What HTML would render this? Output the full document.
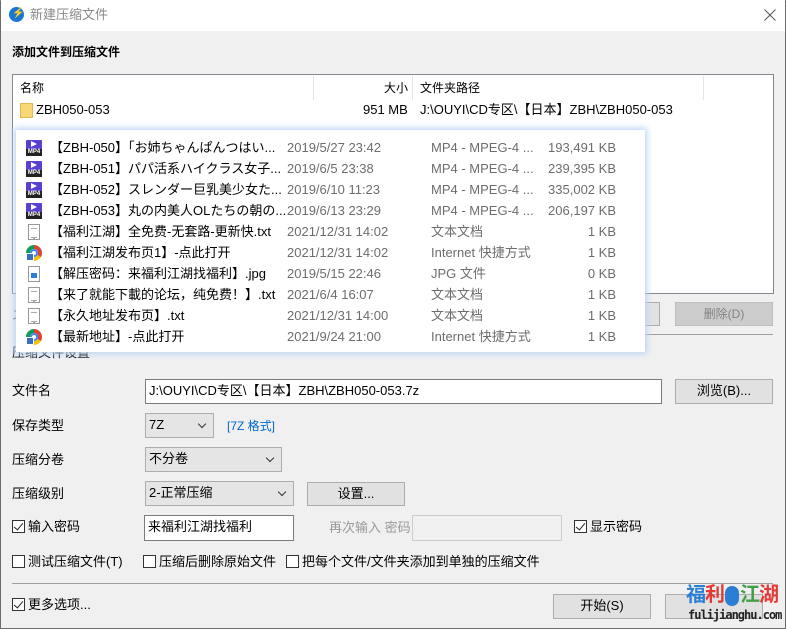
<!DOCTYPE html>
<html><head><meta charset="utf-8"><style>
*{margin:0;padding:0;box-sizing:border-box}
body{width:786px;height:629px;overflow:hidden;background:#f0f0f0;font-family:"Liberation Sans","Noto Sans CJK SC",sans-serif;font-size:12px;color:#000;position:relative}
.a{position:absolute;white-space:nowrap;line-height:16px}
.btn{position:absolute;background:#e1e1e1;border:1px solid #adadad;text-align:center;line-height:22px}
.inp{position:absolute;background:#fff;border:1px solid #7a7a7a;padding-left:3px;line-height:22px}
.sel{position:absolute;background:#e5e5e5;border:1px solid #adadad;padding-left:3px;line-height:22px}
.sel:after{content:"";position:absolute;right:8px;top:7px;width:5px;height:5px;border-right:1px solid #333;border-bottom:1px solid #333;transform:rotate(45deg)}
.cb{position:absolute;width:13px;height:13px;border:1px solid #333;background:#fff}
.cb.on:after{content:"";position:absolute;left:3px;top:0px;width:4px;height:8px;border-right:1.5px solid #222;border-bottom:1.5px solid #222;transform:rotate(40deg)}
.row{position:absolute;left:0;width:629px;height:21px}
.row span{position:absolute;top:2px;line-height:16px;white-space:nowrap}
.g{color:#6d6d6d}
.mp4{position:absolute;left:10px;top:2px;width:16px;height:16px;background:#5b3fd0;border-radius:1px}
.mp4:before{content:"";position:absolute;left:5px;top:1px;border-left:6px solid #fff;border-top:3.5px solid transparent;border-bottom:3.5px solid transparent}
.mp4 i{position:absolute;left:0;bottom:0;width:16px;height:7px;background:#222;color:#fff;font-size:6px;line-height:7px;font-style:normal;text-align:center;font-weight:bold}
.txt{position:absolute;left:12px;top:2px;width:12px;height:16px;background:#fff;border:1px solid #999}
.txt:before{content:"";position:absolute;left:2px;top:3px;width:6px;height:8px;border-top:1px solid #aaa;border-bottom:1px solid #aaa;box-shadow:0 3px 0 -2px #aaa}
.chr{position:absolute;left:10px;top:2px;width:16px;height:16px;border-radius:50%;background:conic-gradient(#db4437 0 120deg,#f4c20d 120deg 240deg,#0f9d58 240deg)}
.chr:before{content:"";position:absolute;left:4px;top:4px;width:8px;height:8px;border-radius:50%;background:#fff;box-shadow:inset 0 0 0 2px #4285f4}
.chr i{position:absolute;left:0;bottom:0;width:8px;height:8px;background:#3a6fc0;border:1px solid #fff}
.jpg{position:absolute;left:12px;top:2px;width:12px;height:16px;background:#fff;border:1px solid #999}
.jpg:before{content:"";position:absolute;left:2px;top:6px;width:6px;height:5px;background:#2a7fd4}
</style></head><body>
<div style="position:absolute;left:0;top:0;width:786px;height:629px;border:1px solid #6b6b6b;border-top-color:#aaa"></div>
<div style="position:absolute;left:1px;top:0;width:784px;height:31px;background:#fff"></div>
<div style="position:absolute;left:9px;top:7px;width:15px;height:15px;border-radius:50%;background:#1976d2"></div>
<div class="a" style="left:12px;top:6px;color:#fff;font-size:10px;font-weight:bold">⚡</div>
<div class="a" style="left:30px;top:7px;color:#888;font-size:13px">新建压缩文件</div>
<svg style="position:absolute;left:764px;top:9px" width="12" height="12"><path d="M0.5 0.5L11.5 11.5M11.5 0.5L0.5 11.5" stroke="#555" stroke-width="1"/></svg>

<div class="a" style="left:12px;top:44px;font-weight:bold;font-size:12px">添加文件到压缩文件</div>

<div style="position:absolute;left:12px;top:74px;width:762px;height:220px;background:#fff;border:1px solid #828790"></div>
<div class="a" style="left:20px;top:80px">名称</div>
<div style="position:absolute;left:313px;top:76px;width:1px;height:24px;background:#e5e5e5"></div>
<div class="a" style="left:384px;top:80px">大小</div>
<div style="position:absolute;left:412px;top:76px;width:1px;height:24px;background:#e5e5e5"></div>
<div class="a" style="left:420px;top:80px">文件夹路径</div>
<div style="position:absolute;left:703px;top:76px;width:1px;height:24px;background:#e5e5e5"></div>
<div style="position:absolute;left:20px;top:103px;width:13px;height:15px;background:#f8d775;border:1px solid #e0b84f"></div>
<div class="a" style="left:36px;top:102px;font-size:13px">ZBH050-053</div>
<div class="a" style="left:363px;top:102px;font-size:13px">951 MB</div>
<div class="a" style="left:420px;top:102px;font-size:13px">J:\OUYI\CD专区\【日本】ZBH\ZBH050-053</div>

<div class="btn" style="left:560px;top:302px;width:100px;height:24px"></div>
<div class="btn" style="left:675px;top:302px;width:98px;height:24px;background:#cccccc;border-color:#bfbfbf;color:#838383">删除(D)</div>
<div class="a" style="left:12px;top:307px">ス</div>
<div style="position:absolute;left:20px;top:334px;width:753px;height:1px;background:#a0a0a0"></div>
<div class="a" style="left:12px;top:345px;font-size:13px">压缩文件设置</div>

<div style="position:absolute;left:16px;top:130px;width:629px;height:222px;background:#fff;box-shadow:0 0 6px 2px #bcd6f4;font-size:13px">
<div class="row" style="top:8px"><div class="mp4"><i>MP4</i></div><span style="left:34px">【ZBH-050】「お姉ちゃんぱんつはい...</span><span class="g" style="left:271px">2019/5/27 23:42</span><span class="g" style="left:415px">MP4 - MPEG-4 ...</span><span class="g" style="right:29px">193,491 KB</span></div>
<div class="row" style="top:29px"><div class="mp4"><i>MP4</i></div><span style="left:34px">【ZBH-051】パパ活系ハイクラス女子...</span><span class="g" style="left:271px">2019/6/5 23:38</span><span class="g" style="left:415px">MP4 - MPEG-4 ...</span><span class="g" style="right:29px">239,395 KB</span></div>
<div class="row" style="top:50px"><div class="mp4"><i>MP4</i></div><span style="left:34px">【ZBH-052】スレンダー巨乳美少女た...</span><span class="g" style="left:271px">2019/6/10 11:23</span><span class="g" style="left:415px">MP4 - MPEG-4 ...</span><span class="g" style="right:29px">335,002 KB</span></div>
<div class="row" style="top:71px"><div class="mp4"><i>MP4</i></div><span style="left:34px">【ZBH-053】丸の内美人OLたちの朝の...</span><span class="g" style="left:271px">2019/6/13 23:29</span><span class="g" style="left:415px">MP4 - MPEG-4 ...</span><span class="g" style="right:29px">206,197 KB</span></div>
<div class="row" style="top:92px"><div class="txt"></div><span style="left:34px">【福利江湖】全免费-无套路-更新快.txt</span><span class="g" style="left:271px">2021/12/31 14:02</span><span class="g" style="left:415px">文本文档</span><span class="g" style="right:29px">1 KB</span></div>
<div class="row" style="top:113px"><div class="chr"><i></i></div><span style="left:34px">【福利江湖发布页1】-点此打开</span><span class="g" style="left:271px">2021/12/31 14:02</span><span class="g" style="left:415px">Internet 快捷方式</span><span class="g" style="right:29px">1 KB</span></div>
<div class="row" style="top:134px"><div class="jpg"></div><span style="left:34px">【解压密码：来福利江湖找福利】.jpg</span><span class="g" style="left:271px">2019/5/15 22:46</span><span class="g" style="left:415px">JPG 文件</span><span class="g" style="right:29px">0 KB</span></div>
<div class="row" style="top:155px"><div class="txt"></div><span style="left:34px">【来了就能下載的论坛，纯免费！】.txt</span><span class="g" style="left:271px">2021/6/4 16:07</span><span class="g" style="left:415px">文本文档</span><span class="g" style="right:29px">1 KB</span></div>
<div class="row" style="top:176px"><div class="txt"></div><span style="left:34px">【永久地址发布页】.txt</span><span class="g" style="left:271px">2021/12/31 14:00</span><span class="g" style="left:415px">文本文档</span><span class="g" style="right:29px">1 KB</span></div>
<div class="row" style="top:197px"><div class="chr"><i></i></div><span style="left:34px">【最新地址】-点此打开</span><span class="g" style="left:271px">2021/9/24 21:00</span><span class="g" style="left:415px">Internet 快捷方式</span><span class="g" style="right:29px">1 KB</span></div>
</div>

<div class="a" style="left:12px;top:383px;font-size:13px">文件名</div>
<div class="inp" style="left:145px;top:379px;width:517px;height:25px;font-size:13px">J:\OUYI\CD专区\【日本】ZBH\ZBH050-053.7z</div>
<div class="btn" style="left:675px;top:379px;width:98px;height:25px;font-size:13px">浏览(B)...</div>

<div class="a" style="left:12px;top:418px;font-size:13px">保存类型</div>
<div class="sel" style="left:145px;top:413px;width:69px;height:25px;font-size:13px">7Z</div>
<div class="a" style="left:227px;top:418px;color:#0066cc">[7Z 格式]</div>

<div class="a" style="left:12px;top:452px;font-size:13px">压缩分卷</div>
<div class="sel" style="left:145px;top:447px;width:137px;height:25px;font-size:13px">不分卷</div>

<div class="a" style="left:12px;top:486px;font-size:13px">压缩级别</div>
<div class="sel" style="left:145px;top:481px;width:149px;height:25px;font-size:13px">2-正常压缩</div>
<div class="btn" style="left:307px;top:482px;width:98px;height:24px;font-size:13px">设置...</div>

<div class="cb on" style="left:12px;top:520px"></div>
<div class="a" style="left:28px;top:519px;font-size:13px">输入密码</div>
<div class="inp" style="left:144px;top:515px;width:150px;height:26px;font-size:13px">来福利江湖找福利</div>
<div class="a" style="left:329px;top:520px;color:#999;font-size:13px">再次输入 密码</div>
<div style="position:absolute;left:412px;top:515px;width:150px;height:26px;background:#f0f0f0;border:1px solid #ccc"></div>
<div class="cb on" style="left:574px;top:520px"></div>
<div class="a" style="left:590px;top:519px;font-size:13px">显示密码</div>

<div class="cb" style="left:12px;top:555px"></div>
<div class="a" style="left:28px;top:554px;font-size:13px">测试压缩文件(T)</div>
<div class="cb" style="left:143px;top:555px"></div>
<div class="a" style="left:159px;top:554px;font-size:13px">压缩后删除原始文件</div>
<div class="cb" style="left:286px;top:555px"></div>
<div class="a" style="left:302px;top:554px;font-size:13px">把每个文件/文件夹添加到单独的压缩文件</div>

<div style="position:absolute;left:12px;top:583px;width:761px;height:1px;background:#a0a0a0"></div>

<div class="cb on" style="left:12px;top:598px"></div>
<div class="a" style="left:28px;top:597px;font-size:13px">更多选项...</div>
<div class="btn" style="left:553px;top:594px;width:98px;height:25px;font-size:13px">开始(S)</div>
<div class="btn" style="left:665px;top:594px;width:98px;height:25px"></div>

<div class="a" style="left:686px;top:584px;font-size:20px;font-weight:bold;letter-spacing:-1px;line-height:22px"><span style="color:#2a7fd4">福</span><span style="color:#e53935">利</span><span style="display:inline-block;width:14px;height:20px;background:#2a7fd4;border-radius:7px;vertical-align:middle;margin:0 1px"></span><span style="color:#43a047">江</span><span style="color:#e53935">湖</span></div>
<div class="a" style="left:688px;top:607px;font-size:12px;font-weight:bold;color:#222;font-family:'DejaVu Sans Mono',monospace;letter-spacing:-1px">fulijianghu.com</div>
</body></html>
